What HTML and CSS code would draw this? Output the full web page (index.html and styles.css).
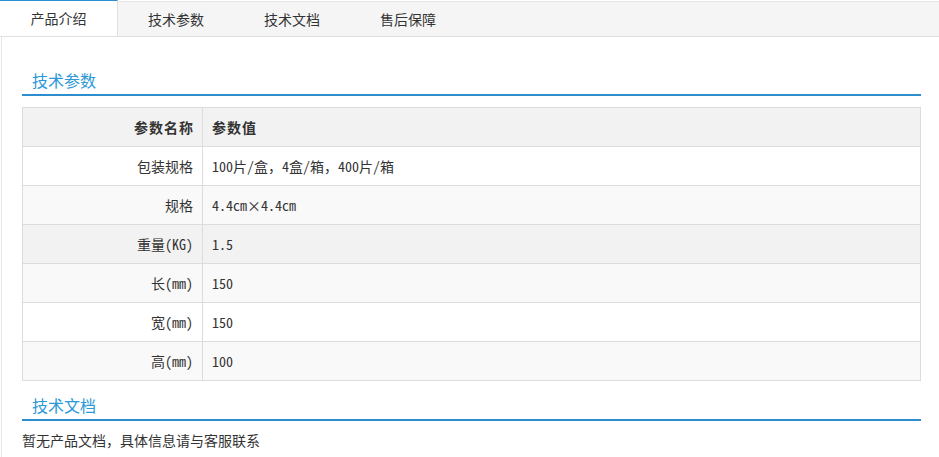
FILE: index.html
```html
<!DOCTYPE html>
<html lang="zh-CN">
<head>
<meta charset="utf-8">
<title>产品详情</title>
<link rel="stylesheet" href="styles.css">
</head>
<body>
<div class="page">
  <div class="tabs">
    <div class="tab active">产品介绍</div>
    <div class="tab">技术参数</div>
    <div class="tab">技术文档</div>
    <div class="tab">售后保障</div>
  </div>
  <div class="content">
    <h2 class="section-title first">技术参数</h2>
    <table class="params">
      <thead>
        <tr><th class="name">参数名称</th><th class="value">参数值</th></tr>
      </thead>
      <tbody>
        <tr><td class="name">包装规格</td><td class="value">100片/盒，4盒/箱，400片/箱</td></tr>
        <tr class="odd"><td class="name">规格</td><td class="value">4.4cm×4.4cm</td></tr>
        <tr class="hover"><td class="name">重量(KG)</td><td class="value">1.5</td></tr>
        <tr class="odd"><td class="name">长(mm)</td><td class="value">150</td></tr>
        <tr><td class="name">宽(mm)</td><td class="value">150</td></tr>
        <tr class="odd"><td class="name">高(mm)</td><td class="value">100</td></tr>
      </tbody>
    </table>
    <h2 class="section-title second">技术文档</h2>
    <p class="note">暂无产品文档，具体信息请与客服联系</p>
  </div>
</div>
</body>
</html>
```

FILE: styles.css
```css
html, body {
  margin: 0;
  padding: 0;
  background: #fff;
}
body {
  font-family: "Noto Sans CJK SC", "Microsoft YaHei", sans-serif;
  color: #333;
  font-size: 14px;
}
.page {
  margin-left: 1px;
  border-left: 1px solid #e6e6e6;
  min-height: 457px;
  box-sizing: border-box;
}
.tabs {
  display: flex;
  margin-top: 1px;
  margin-left: -2px;
  height: 34px;
  background: #f5f5f5;
  border-top: 1px solid #e6e6e6;
  border-bottom: 1px solid #e0e0e0;
}
.tab {
  width: 116px;
  text-align: center;
  line-height: 34px;
  font-size: 14px;
  color: #333;
}
.tab.active {
  width: 118px;
  margin-top: -2px;
  height: 36px;
  line-height: 35px;
  background: #fff;
  border-top: 1px solid #2b8fd0;
  border-right: 1px solid #e0e0e0;
  box-sizing: border-box;
}
.content {
  padding: 0 18px 0 20px;
}
.section-title {
  margin: 0;
  padding: 0 0 2px 10px;
  font-size: 16px;
  font-weight: normal;
  line-height: 24px;
  color: #2b98d7;
  border-bottom: 2px solid #2d8dcd;
}
.section-title.first {
  margin-top: 31px;
}
.section-title.second {
  margin-top: 12px;
}
.params {
  margin-top: 11px;
  width: 100%;
  border-collapse: collapse;
  font-family: "Noto Sans Mono CJK SC", "Noto Sans CJK SC", monospace;
  font-size: 14px;
  color: #333;
}
.params th, .params td {
  border: 1px solid #dcdcdc;
  height: 39px;
  padding: 0 9px;
  box-sizing: border-box;
}
.params th {
  background: #f2f2f2;
  font-weight: bold;
  letter-spacing: 1px;
}
.params .name {
  width: 180px;
  text-align: right;
}
.params th.name {
  padding-right: 8px;
}
.params .value {
  text-align: left;
}
.params tr.odd td {
  background: #f9f9f9;
}
.params tr.hover td {
  background: #f2f2f2;
}
.note {
  margin: 7px 0 0 0;
  line-height: 24px;
  font-size: 14px;
  color: #333;
}
```
